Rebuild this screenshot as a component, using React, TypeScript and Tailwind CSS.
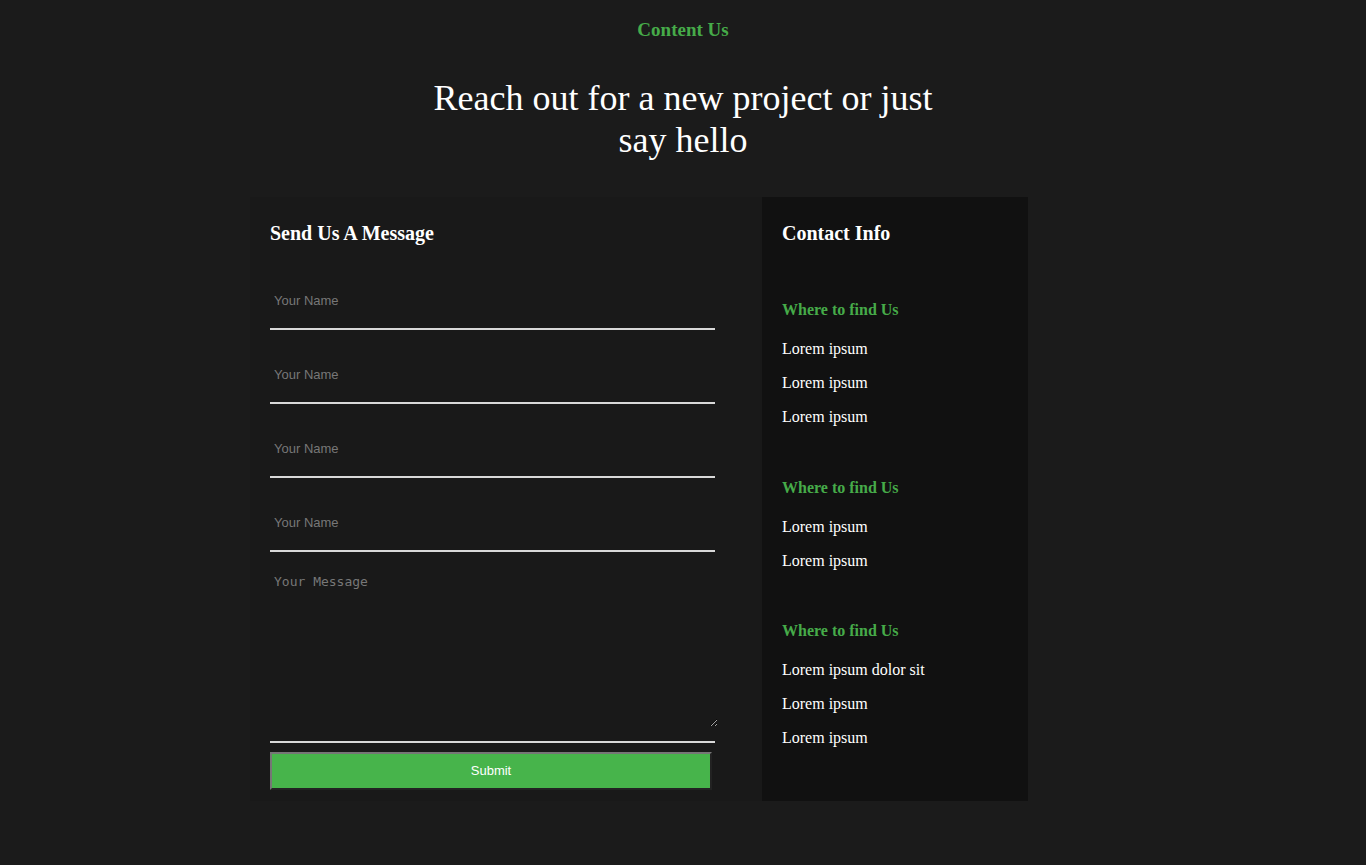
const SERIF = { fontFamily: '"Liberation Serif", "Times New Roman", serif' };

const CONTACT_GROUPS = [
  { title: 'Where to find Us', items: ['Lorem ipsum', 'Lorem ipsum', 'Lorem ipsum'], gap: 'mt-[56px]' },
  { title: 'Where to find Us', items: ['Lorem ipsum', 'Lorem ipsum'], gap: 'mt-[51px]' },
  { title: 'Where to find Us', items: ['Lorem ipsum dolor sit', 'Lorem ipsum', 'Lorem ipsum'], gap: 'mt-[50px]' },
];

export default function App() {
  return (
    <div className="min-h-[865px] w-full bg-[#1b1b1b] font-['Liberation_Serif',serif] text-white">
      {/* Header */}
      <div className="pt-[19px] text-center">
        <h4 className="text-[19px] leading-[22px] font-bold text-[#46ab49]">Content Us</h4>
        <h1 className="mx-auto mt-[36px] w-[520px] text-[36px] leading-[42px] font-normal">
          Reach out for a new project or just say hello
        </h1>
      </div>

      {/* Panels */}
      <div className="mt-[36px] ml-[250px] flex">
        <ContactForm />
        <ContactInfo />
      </div>
    </div>
  );
}

function ContactForm() {
  const fields = ['Your Name', 'Your Name', 'Your Name', 'Your Name'];
  return (
    <div className="w-[512px] bg-[#191919] px-[20px] pt-[25px] pb-[11px]">
      <h3 className="text-[20px] leading-[22px] font-bold" style={SERIF}>Send Us A Message</h3>
      <form className="mt-[42px] flex flex-col" onSubmit={e => e.preventDefault()}>
        {fields.map((f, i) => (
          <input
            key={i}
            type="text"
            placeholder={f}
            className="mb-[30px] h-[44px] w-[445px] border-b-2 border-[#d8d8d8] bg-transparent px-[4px] pb-[14px] font-['Liberation_Sans',Arial,sans-serif] text-[13px] text-white outline-none placeholder:text-[#777]"
          />
        ))}
        <textarea
          placeholder="Your Message"
          className="-mt-[12px] h-[157px] w-[448px] bg-transparent p-[4px] font-['DejaVu_Sans_Mono','Liberation_Mono',monospace] text-[13px] leading-[15px] text-white outline-none placeholder:text-[#777]"
        />
        <div className="mt-[14px] h-[2px] w-[445px] bg-[#d8d8d8]" />
        <button
          type="submit"
          className="mt-[9px] h-[38px] w-[442px] border-2 border-t-[#767676] border-l-[#767676] border-r-[#222] border-b-[#222] bg-[#47b44b] font-['Liberation_Sans',Arial,sans-serif] text-[13px] text-white"
        >
          Submit
        </button>
      </form>
    </div>
  );
}

function ContactInfo() {
  return (
    <div className="w-[266px] bg-[#111111] px-[20px] pt-[25px]" style={SERIF}>
      <h3 className="text-[20px] leading-[22px] font-bold">Contact Info</h3>
      {CONTACT_GROUPS.map((g, i) => (
        <div key={i} className={g.gap}>
          <h5 className="text-[16px] leading-[20px] font-bold text-[#46ab49]">{g.title}</h5>
          <ul className="mt-[19px] flex flex-col gap-[14px]">
            {g.items.map((it, j) => (
              <li key={j} className="text-[16px] leading-[20px]">{it}</li>
            ))}
          </ul>
        </div>
      ))}
    </div>
  );
}
